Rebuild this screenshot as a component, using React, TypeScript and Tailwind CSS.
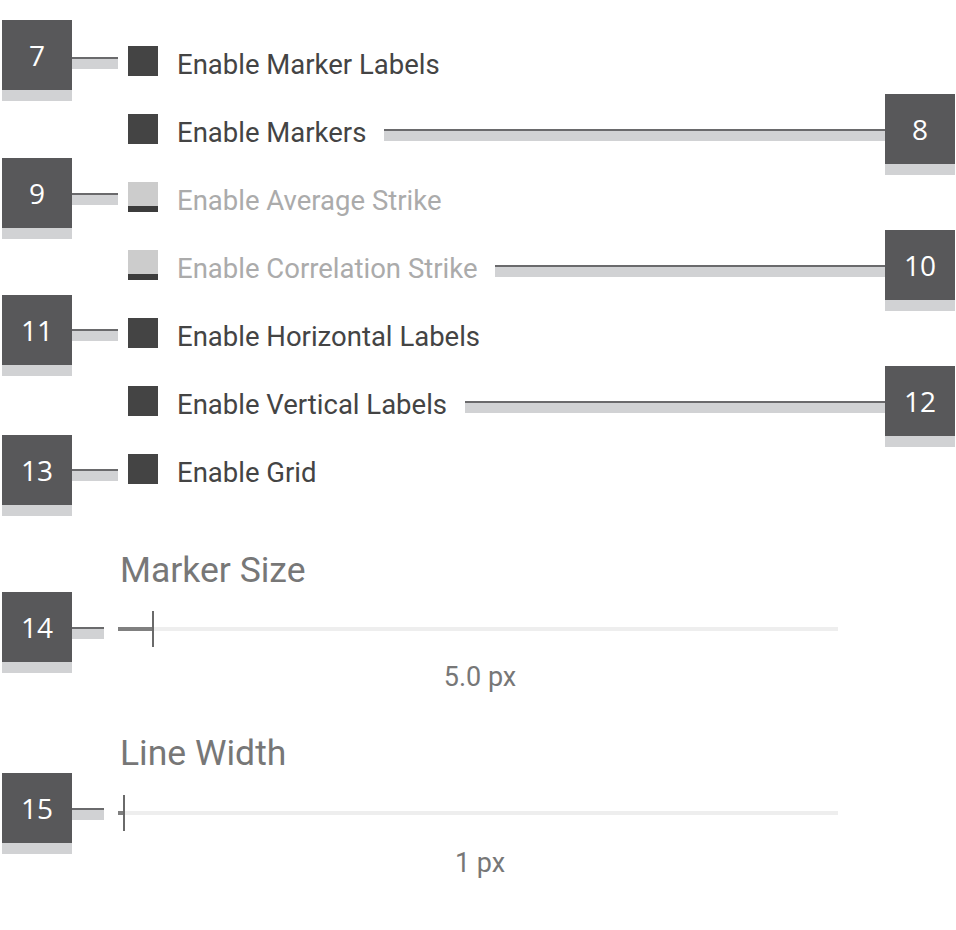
import React from 'react';

type Side = 'left' | 'right';

interface OptionRow {
  badge: number;
  side: Side;
  label: string;
  disabled?: boolean;
  // nudges for the left-hand callouts, they don't sit exactly on the row
  badgeShift?: string;
  lineShift?: string;
}

const options: OptionRow[] = [
  { badge: 7, side: 'left', label: 'Enable Marker Labels', badgeShift: '-translate-y-[6px]', lineShift: '-translate-y-[4px]' },
  { badge: 8, side: 'right', label: 'Enable Markers' },
  { badge: 9, side: 'left', label: 'Enable Average Strike', disabled: true, badgeShift: '-translate-y-[4px]', lineShift: '-translate-y-[4px]' },
  { badge: 10, side: 'right', label: 'Enable Correlation Strike', disabled: true },
  { badge: 11, side: 'left', label: 'Enable Horizontal Labels', badgeShift: '-translate-y-[3px]', lineShift: '-translate-y-[4px]' },
  { badge: 12, side: 'right', label: 'Enable Vertical Labels' },
  { badge: 13, side: 'left', label: 'Enable Grid', badgeShift: 'translate-y-[1px]', lineShift: 'translate-y-0' },
];

function Badge({ n }: { n: number }) {
  return (
    <div className="w-[70px] h-[70px] shrink-0 bg-[#58585a] shadow-[0_11px_0_#d1d2d4] flex items-center justify-center text-white text-[28px] font-normal font-['Open_Sans',sans-serif]">
      {n}
    </div>
  );
}

// dark rule with the grey "shadow" bar hanging beneath it
function Connector({ className = '' }: { className?: string }) {
  return <div className={`h-[12px] mt-[12px] border-t-2 border-[#6a6a6c] bg-[#d1d2d4] ${className}`} />;
}

function Checkbox({ disabled }: { disabled?: boolean }) {
  if (disabled) {
    return (
      <div className="w-[30px] h-[30px] shrink-0 bg-[#cccccc] flex flex-col justify-end">
        <div className="h-[6px] bg-[#3c3c3c]" />
      </div>
    );
  }
  return <div className="w-[30px] h-[30px] shrink-0 bg-[#444444]" />;
}

function Option({ row }: { row: OptionRow }) {
  return (
    <div className="flex items-center h-[68px]">
      <div className="w-[126px] shrink-0 flex items-center">
        {row.side === 'left' && (
          <>
            <div className={row.badgeShift}>
              <Badge n={row.badge} />
            </div>
            <Connector className={`w-[46px] ${row.lineShift}`} />
          </>
        )}
      </div>
      <Checkbox disabled={row.disabled} />
      <span
        className={`ml-[19px] text-[27.5px] leading-none translate-y-[4px] ${
          row.disabled ? 'text-[#ababab]' : 'text-[#444444]'
        }`}
      >
        {row.label}
      </span>
      {row.side === 'right' && (
        <>
          <Connector className="flex-1 ml-[18px]" />
          <Badge n={row.badge} />
        </>
      )}
    </div>
  );
}

function SliderBlock({
  badge,
  title,
  value,
  fill,
  rowGap,
  trackShift,
  valueGap,
}: {
  badge: number;
  title: string;
  value: string;
  fill: number;
  rowGap: string;
  trackShift: string;
  valueGap: string;
}) {
  return (
    <div>
      <div className="ml-[118px] h-[42px] text-[35.5px] leading-[42px] text-[#777777]">{title}</div>
      <div className={`flex items-center h-[70px] ${rowGap}`}>
        <Badge n={badge} />
        <Connector className="w-[32px]" />
        <div className={`relative ml-[14px] w-[720px] h-[4px] bg-[#eeeeee] ${trackShift}`}>
          <div className="absolute left-0 top-0 h-[4px] bg-[#808080]" style={{ width: fill }} />
          <div className="absolute top-[-16px] w-[1.5px] h-[36px] bg-[#6a6a6a]" style={{ left: fill }} />
        </div>
      </div>
      <div className={`ml-[118px] w-[720px] text-center text-[27px] leading-[30px] text-[#777777] ${valueGap}`}>
        {value}
      </div>
    </div>
  );
}

export default function App() {
  return (
    <div className="w-[956px] h-[930px] bg-white font-['Roboto',sans-serif] pl-[2px] pr-[1px] pt-[27px]">
      {options.map((row) => (
        <Option key={row.badge} row={row} />
      ))}
      <div className="mt-[46px]">
        <SliderBlock
          badge={14}
          title="Marker Size"
          value="5.0 px"
          fill={34}
          rowGap="mt-[1px]"
          trackShift="translate-y-[2px]"
          valueGap="mt-0"
        />
      </div>
      <div className="mt-[40px]">
        <SliderBlock
          badge={15}
          title="Line Width"
          value="1 px"
          fill={5}
          rowGap="-mt-[1px]"
          trackShift="translate-y-[5px]"
          valueGap="mt-[5px]"
        />
      </div>
    </div>
  );
}
